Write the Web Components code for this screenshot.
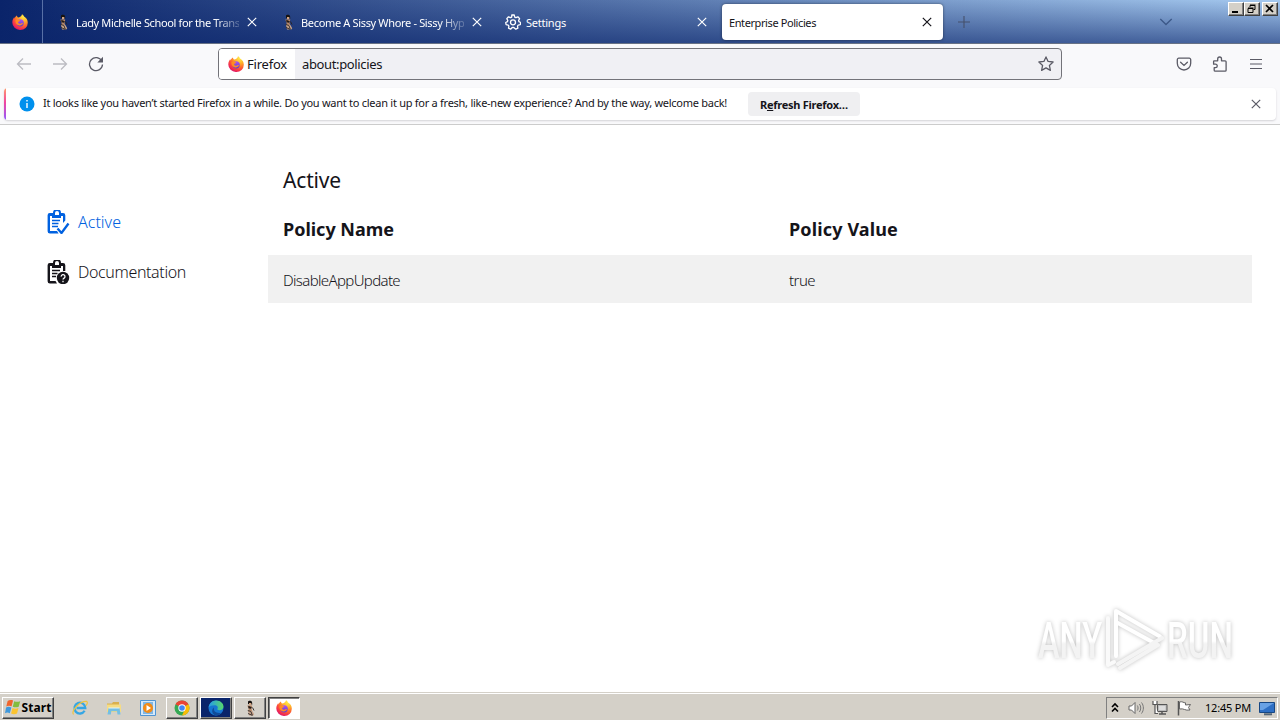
<!DOCTYPE html>
<html lang="en">
<head>
<meta charset="utf-8">
<title>Enterprise Policies</title>
<style>
    html, body {
        margin: 0;
        height: 100%;
        overflow: hidden;
        background: #fff;
    }
    body {
        font-family: "Noto Sans", "DejaVu Sans Condensed", sans-serif;
        font-size: 11px;
        color: #000;
    }
</style>
</head>
<body>
<desktop-screen></desktop-screen>
<script>
const FIREFOX = `
    <defs>
        <radialGradient id="fx" cx=".75" cy=".12" r=".95">
            <stop offset="0" stop-color="#fff04a"/><stop offset=".35" stop-color="#ffb02a"/>
            <stop offset=".62" stop-color="#ff6a2c"/><stop offset=".85" stop-color="#f5304c"/>
            <stop offset="1" stop-color="#d9186c"/>
        </radialGradient>
        <linearGradient id="fg" x1="0" y1="0" x2="0" y2="1">
            <stop offset="0" stop-color="#b054f0"/><stop offset="1" stop-color="#5a3bd0"/>
        </linearGradient>
    </defs>
    <path fill="url(#fx)" d="M10 .2c1.200 .6 1.700 1.500 2.100 2.400 2.300 1.300 3.700 3.500 3.700 6.100A7.500 7.200 0 0 1 8.200 16 7.700 7.400 0 0 1 .3 8.500C.3 6.200 1.200 4.400 2.300 3c0 .6.1 1 .3 1.400C3 3.100 3.900 2 5 1.400c0 1 .5 1.700 1.200 2.200C7.800 3 9.800 2.200 10 .2z"/>
    <circle cx="8.200" cy="8.800" r="3.600" fill="url(#fg)"/>
    <path fill="#ff8b24" d="M3.500 6.200c1.500-1 3.300-.9 4.600.2-.2.900-1.600 1-2 1.700-.2.900.7 1.900 2.100 1.700 1.200-.2 1.800-1 2.800-.7-.6 1.700-2.300 2.700-4 2.300-2.300-.4-3.900-2.600-3.500-5.200z"/>`;

const ICONS = {
    firefox: FIREFOX,
    close: `<path d="M3.800 3.800l8.400 8.400M12.200 3.800l-8.400 8.400" fill="none" stroke="currentColor" stroke-width="1.200"/>`,
    plus: `<path d="M8 2v12M2 8h12" fill="none" stroke="currentColor" stroke-width="1.100"/>`,
    chevron: `<path d="M2.300 5l5.700 5.500L13.700 5" fill="none" stroke="currentColor" stroke-width="1.300"/>`,
    back: `<path d="M15 8H1.500M7 2.500L1.500 8 7 13.500" fill="none" stroke="currentColor" stroke-width="1.300"/>`,
    forward: `<path d="M1 8h13.500M9 2.500L14.500 8 9 13.500" fill="none" stroke="currentColor" stroke-width="1.300"/>`,
    reload: `<path d="M13.800 5.200A6.500 6.500 0 1 0 14.500 8.500" fill="none" stroke="currentColor" stroke-width="1.300"/><path d="M15 .8v5.700H9.300z" fill="currentColor"/>`,
    star: `<path d="M8 .9l2.100 4.500 5 .6-3.700 3.400 1 5L8 11.900l-4.400 2.500 1-5L.9 6l5-.6z" fill="none" stroke="currentColor" stroke-width="1.300" stroke-linejoin="round"/>`,
    pocket: `<path d="M2.800 2.200h10.400a1.500 1.500 0 0 1 1.500 1.500v3.600a6.700 6.700 0 0 1-13.400 0V3.700a1.500 1.500 0 0 1 1.500-1.500zM4.600 6.200L8 9.400l3.400-3.200" fill="none" stroke="currentColor" stroke-width="1.300" stroke-linecap="round"/>`,
    puzzle: `<path d="M2.200 4.800h3.500V2.900a1.900 1.900 0 0 1 3.800 0v1.900h3.600a1 1 0 0 1 1 1v8.400a1 1 0 0 1-1 1H3.200a1 1 0 0 1-1-1v-2.500h1.300a1.700 1.700 0 0 0 0-3.500H1.600V5.400a.6.600 0 0 1 .6-.6z" fill="none" stroke="currentColor" stroke-width="1.300" stroke-linejoin="round"/>`,
    menu: `<path d="M2 3.500h12M2 8h12M2 12.500h12" fill="none" stroke="currentColor" stroke-width="1.200"/>`,
    gear: `<path d="M6.800 1h2.400l.5 2.100 1.200.6 2-.9 1.700 1.800-1 1.900.4 1.200 1.700.8-.4 2.200-2.100.4-.7 1 .4 2.100-2.100 1L8.800 13.500H7.200L5.600 15.200l-2.100-1 .4-2.100-.7-1-2.100-.4-.4-2.200 1.700-.8.400-1.200-1-1.900 1.700-1.800 2 .9 1.200-.6z" fill="none" stroke="currentColor" stroke-width="1.300" stroke-linejoin="round"/><circle cx="8" cy="8.300" r="2.500" fill="none" stroke="currentColor" stroke-width="1.300"/>`,
    info: `<circle cx="8" cy="8" r="7.500" fill="#0090ed"/><path d="M8 7v5M8 4v1.500" stroke="#fff" stroke-width="1.400"/>`,
    lady: `<path d="M6 1.500C6.500.3 9.500.3 10 2l.3 2.500H8L6 4z" fill="#17120f"/><path d="M7 3h2.300v2.300H7z" fill="#d3a583"/><path d="M5.300 5.500h5l-.8 3.500.8 2.500-4.300.5.7-3z" fill="#b78867"/><path d="M6.300 5.800l3.500 1.400-.8 1.600-2.600-.5z" fill="#231b18"/><path d="M6 11l4.200-.3 2 3.600-1 1.200H7z" fill="#c9a58c"/><path d="M5.800 10.600l3 .8 1.500 3.600M10.500 7.500l1.500 3M6 13.500l4.500 2" stroke="#282321" fill="none" stroke-width=".9"/>`,
    active: `<path fill-rule="evenodd" fill="currentColor" d="M4 3h3a4 4 0 0 1 8 0h2a2.300 2.300 0 0 1 2.300 2.300v5.200l-2.300 2.600V6h-2v2H6V6H4v15h7l1.600 2.500H4A2.400 2.400 0 0 1 1.600 21V5.300A2.300 2.300 0 0 1 4 3zm5 2h4V3a2 2 0 0 0-4 0z"/><path d="M6 10.500h8M6 13.500h6.500M6 16.500h6" stroke="currentColor" stroke-width="1.500"/><path d="M11.500 18.500l4 4.500 7-9.500" fill="none" stroke="currentColor" stroke-width="2.300"/>`,
    documentation: `<path fill-rule="evenodd" fill="currentColor" d="M4 3h3a4 4 0 0 1 8 0h2a2.300 2.300 0 0 1 2.300 2.300V11h-2.300V6h-2v2H6V6H4v15h5.500l1.500 2.500H4A2.400 2.400 0 0 1 1.600 21V5.300A2.300 2.300 0 0 1 4 3zm5 2h4V3a2 2 0 0 0-4 0z"/><path d="M6 10.500h8M6 13.500h5.500M6 16.500h4" stroke="currentColor" stroke-width="1.500"/><circle cx="17" cy="18" r="6.200" fill="currentColor"/><path d="M15.200 16.600a1.900 1.900 0 1 1 2.900 1.500c-.8.500-1.100.7-1.100 1.500M17 20.800v1.400" fill="none" stroke="#fff" stroke-width="1.300"/>`,
    flag: `<path d="M7.600 1.500C5.600.7 4 1 2.500 1.800L1.200 7c1.600-.8 3.300-.9 5-.1z" fill="#f0642c"/><path d="M8.700 2c1.700.9 3.700.9 5.600 0l-1.400 5.200c-1.800.9-3.700.9-5.600 0z" fill="#82bd3e"/><path d="M1 8c1.600-.9 3.300-.8 5 0l-1.500 5.300c-1.600-.8-3-.8-4.500 0z" fill="#3f98dc"/><path d="M7.100 8.400c1.700.9 3.700.9 5.600 0l-1.400 5.200c-1.900.9-3.800.9-5.600 0z" fill="#fbc430"/>`,
    ie: `<path d="M12.600 10.800A5.400 5.400 0 1 1 13.300 8H4.500" fill="none" stroke="#35a6e4" stroke-width="2.300"/><path d="M1.500 14.500C-1 11 7.500 1 14.500 1.400c1.600.7.500 3-.6 4.300" fill="none" stroke="#efc43e" stroke-width="1.200"/>`,
    folder: `<path d="M1 3.500h5l1-1.500h6v3H1z" fill="#d9b04f"/><path d="M1 4.500h14V12H1z" fill="#f6dc83"/><path d="M2.500 8h11l1 6.500h-3l-.5-3.300H5.300l-.5 3.300H1.500z" fill="#74bfe4"/><path d="M2.500 8h11" stroke="#dff4ff"/>`,
    player: `<path d="M.5.5h15v15H.5z" fill="#d7e9f8" stroke="#4f94d3"/><path d="M3 2h10v12H3z" fill="#7eb6e5"/><circle cx="8" cy="8" r="5" fill="#f38b16"/><path d="M6.500 5l4.500 3-4.500 3z" fill="#fff"/>`,
    chrome: `<circle cx="8" cy="8" r="7.500" fill="#35a853"/><path d="M8 8L1.500 4.200A7.500 7.500 0 0 1 14.500 4.300z" fill="#ea4335"/><path d="M8 8l6.500-3.700A7.500 7.500 0 0 1 8 15.500L11 9z" fill="#fbbc05"/><circle cx="8" cy="8" r="3.700" fill="#fff"/><circle cx="8" cy="8" r="2.800" fill="#4285f4"/>`,
    edge: `<defs><linearGradient id="eg"><stop offset="0" stop-color="#249bea"/><stop offset="1" stop-color="#58d86b"/></linearGradient></defs><circle cx="8" cy="8" r="7.500" fill="#1676d2"/><path d="M.6 7.500C1 3.300 4.300.5 8 .5c4.500 0 7.500 3 7.500 6 0 2.200-1.700 3.700-4 3.700-1.700 0-2.600-.7-2-1.600.9-1.500-.4-3.300-2.800-3.300C4 5.300 1.800 6 .6 7.500z" fill="url(#eg)"/><path d="M6 7.500c-.8 3.800 2.200 6.300 7.500 5.200A7.500 7.500 0 0 1 7 15.400C3.600 13.500 3.300 9.500 6 7.500z" fill="#124b98"/>`,
    up: `<path d="M5 7l3-3 3 3M5 11.500l3-3 3 3" fill="none" stroke="#000" stroke-width="1.600"/>`,
    speaker: `<path d="M1 6h2.500L7 2.500v11L3.500 10H1z" fill="#fff" stroke="#666" stroke-width="1"/><path d="M9.300 5.500c1 1.500 1 3.500 0 5M11.400 4c1.800 2.300 1.800 5.700 0 8M13.500 2.500c2.500 3.200 2.500 7.800 0 11" fill="none" stroke="#777"/>`,
    network: `<path d="M5.500 4.500h9.500v7H5.500z" fill="#bbb" stroke="#555"/><path d="M7 6h6.500v4H7z" fill="#ddd"/><path d="M7 14h7M10 12v2" stroke="#555" stroke-width="1.500"/><path d="M1 1v3.500h4V1M3 4.500v9h3" stroke="#555" stroke-width="1.200" fill="#fff"/>`,
    notice: `<path d="M2.500 1v14.500" stroke="#555" stroke-width="1.500"/><path d="M3.500 2c3-1 4 1 6 .8V5l5-.5-2 3 1.500 2.500c-5 1-6-2-10.500-1z" fill="#fff" stroke="#666"/>`,
    show: `<path d="M.5 2.500h15v10H.5z" fill="#2e6fc4" stroke="#174783"/><path d="M1 3h14L4 10H1z" fill="#69a2e5"/><path d="M5 14.300h8" stroke="#567" stroke-width="2"/>`
};

class UiIcon extends HTMLElement{
    connectedCallback(){
        const size = this.getAttribute('size') || 16;
        const box = this.getAttribute('box') || 16;
        this.attachShadow({mode: 'open'}).innerHTML = `
        <style>
            :host { display: block; flex: none; width: ${size}px; height: ${size}px; }
            svg { display: block; }
        </style>
        <svg width="${size}" height="${size}" viewBox="0 0 ${box} ${box}">${ICONS[this.getAttribute('name')]}</svg>`;
    }
}
customElements.define('ui-icon', UiIcon);

// One line of text, tracked so that it takes exactly its "width"
class UiLabel extends HTMLElement{
    connectedCallback(){
        this.attachShadow({mode: 'open'}).innerHTML = `
        <style>
            :host { display: block; flex: none; white-space: nowrap; }
            span { display: inline-block; }
        </style>
        <span><slot></slot></span>`;
        const span = this.shadowRoot.querySelector('span');
        const width = Number(this.getAttribute('width'));
        const spacing = (width - span.getBoundingClientRect().width) / this.textContent.length;
        span.style.letterSpacing = spacing + 'px';
    }
}
customElements.define('ui-label', UiLabel);

class BrowserTab extends HTMLElement{
    connectedCallback(){
        const icon = this.getAttribute('icon');
        this.attachShadow({mode: 'open'}).innerHTML = `
        <style>
            :host {
                display: flex;
                align-items: center;
                box-sizing: border-box;
                width: 221px;
                height: 36px;
                padding: 0 8px;
                gap: 5px;
                color: #fff;
                border-radius: 4px;
            }
            :host([selected]) {
                padding-left: 7px;
                background: #fff;
                color: #15141a;
                box-shadow: 0 0 3px rgba(0, 0, 0, .5);
            }
            .title {
                flex: 1;
                overflow: hidden;
                line-height: 16px;
                padding-top: 2px;
            }
            :host([fade]) .title {
                -webkit-mask-image: linear-gradient(to right, #000 138px, transparent 170px);
                mask-image: linear-gradient(to right, #000 138px, transparent 170px);
            }
        </style>
        ${icon ? `<ui-icon name="${icon}"></ui-icon>` : ''}
        <div class="title"><slot></slot></div>
        <ui-icon name="close"></ui-icon>`;
    }
}
customElements.define('browser-tab', BrowserTab);

class WindowButtons extends HTMLElement{
    connectedCallback(){
        this.attachShadow({mode: 'open'}).innerHTML = `
        <style>
            :host { display: flex; position: absolute; top: 2px; right: 2px; }
            i {
                box-sizing: border-box;
                width: 16px;
                height: 14px;
                background: #d4d0c8;
                border: 1px solid;
                border-color: #fff #404040 #404040 #fff;
                box-shadow: inset -1px -1px #808080;
            }
            i:last-child { margin-left: 2px; }
            svg { display: block; }
        </style>
        <i><svg width="14" height="12"><path d="M3 9h6" stroke="#000" stroke-width="2"/></svg></i>
        <i><svg width="14" height="12"><path d="M5 4V2.500h5v4H8.500M5 2h5.500M3 5.500h5v4H3zM3 5h5.500" fill="none" stroke="#000"/></svg></i>
        <i><svg width="14" height="12"><path d="M3 2l7 7M10 2L3 9" stroke="#000" stroke-width="1.700"/></svg></i>`;
    }
}
customElements.define('window-buttons', WindowButtons);

class TabStrip extends HTMLElement{
    connectedCallback(){
        this.attachShadow({mode: 'open'}).innerHTML = `
        <style>
            :host {
                display: flex;
                align-items: center;
                position: relative;
                box-sizing: border-box;
                height: 44px;
                border-bottom: 1px solid #687285;
                background: linear-gradient(to bottom, rgba(10, 36, 106, 0), rgba(10, 36, 106, .6)),
                    linear-gradient(to right, #0a246a, #a6caf0);
            }
            .view {
                box-sizing: border-box;
                width: 43px;
                height: 43px;
                padding: 14px 0 0 12px;
                border-right: 1px solid #5870a6;
            }
            .tabs { display: flex; gap: 4px; margin-left: 4px; }
            .new { margin-left: 13px; color: #45516c; }
            .all { margin-left: 186px; color: #3c5888; }
        </style>
        <div class="view"><ui-icon name="firefox"></ui-icon></div>
        <div class="tabs">
            <browser-tab icon="lady" fade><ui-label width="170">Lady Michelle School for the Transg</ui-label></browser-tab>
            <browser-tab icon="lady" fade><ui-label width="170">Become A Sissy Whore - Sissy Hypn</ui-label></browser-tab>
            <browser-tab icon="gear"><ui-label width="40">Settings</ui-label></browser-tab>
            <browser-tab selected><ui-label width="87">Enterprise Policies</ui-label></browser-tab>
        </div>
        <ui-icon class="new" name="plus"></ui-icon>
        <ui-icon class="all" name="chevron"></ui-icon>
        <window-buttons></window-buttons>`;
    }
}
customElements.define('tab-strip', TabStrip);

class NavBar extends HTMLElement{
    connectedCallback(){
        this.attachShadow({mode: 'open'}).innerHTML = `
        <style>
            :host {
                display: flex;
                align-items: center;
                height: 40px;
                padding: 0 16px;
                background: #f9f9fb;
                color: #5b5b66;
            }
            .history { display: flex; gap: 20px; flex: 1; }
            .off { color: #bcbcc2; }
            .url {
                display: flex;
                align-items: center;
                box-sizing: border-box;
                width: 844px;
                height: 32px;
                padding-right: 7px;
                border: 1px solid #737379;
                border-radius: 4px;
                background: #f0f0f4;
                overflow: hidden;
                font-size: 13px;
                line-height: 20px;
                color: #15141a;
            }
            .identity {
                display: flex;
                align-items: center;
                box-sizing: border-box;
                width: 76px;
                height: 30px;
                padding-left: 9px;
                gap: 3px;
                margin-right: 7px;
                background: #fff;
            }
            .star { margin-left: auto; color: #5b5b66; }
            .tools { display: flex; gap: 20px; flex: 1; justify-content: flex-end; }
            .history { margin-right: 0; flex: 0 0 202px; }
        </style>
        <div class="history">
            <ui-icon class="off" name="back"></ui-icon>
            <ui-icon class="off" name="forward"></ui-icon>
            <ui-icon name="reload"></ui-icon>
        </div>
        <div class="url">
            <div class="identity"><ui-icon name="firefox"></ui-icon><ui-label width="40">Firefox</ui-label></div>
            <ui-label width="80">about:policies</ui-label>
            <ui-icon class="star" name="star"></ui-icon>
        </div>
        <div class="tools">
            <ui-icon name="pocket"></ui-icon>
            <ui-icon name="puzzle"></ui-icon>
            <ui-icon name="menu"></ui-icon>
        </div>`;
    }
}
customElements.define('nav-bar', NavBar);

class NotificationBar extends HTMLElement{
    connectedCallback(){
        this.attachShadow({mode: 'open'}).innerHTML = `
        <style>
            :host {
                display: block;
                box-sizing: border-box;
                height: 41px;
                padding: 4px 4px 4px 4px;
                border-bottom: 1px solid #ccc;
                background: #f9f9fb;
            }
            .bar {
                display: flex;
                align-items: center;
                height: 32px;
                box-sizing: border-box;
                padding: 0 12px 0 0;
                border-radius: 4px;
                background: #fff;
                box-shadow: 0 1px 2px rgba(58, 57, 68, .2);
                color: #15141a;
                line-height: 16px;
                overflow: hidden;
            }
            .accent { width: 2px; height: 32px; margin-right: 13px; background: linear-gradient(#ff9a6b, #f1469f 45%, #9059ff); }
            .message { margin: -2px 21px 0 8px; }
            button {
                width: 112px;
                height: 24px;
                padding: 0;
                border: 0;
                border-radius: 4px;
                background: #efeff1;
                color: #15141a;
                font: bold 11px "Noto Sans", sans-serif;
            }
            button ui-label { display: inline-block; }
            .close { margin-left: auto; color: #5b5b66; }
        </style>
        <div class="bar">
            <div class="accent"></div>
            <ui-icon name="info"></ui-icon>
            <ui-label class="message" width="684">It looks like you haven’t started Firefox in a while. Do you want to clean it up for a fresh, like-new experience? And by the way, welcome back!</ui-label>
            <button><ui-label width="88">R<u>e</u>fresh Firefox…</ui-label></button>
            <ui-icon class="close" name="close"></ui-icon>
        </div>`;
    }
}
customElements.define('notification-bar', NotificationBar);

class PolicyCategory extends HTMLElement{
    connectedCallback(){
        this.attachShadow({mode: 'open'}).innerHTML = `
        <style>
            :host {
                display: flex;
                align-items: center;
                height: 50px;
                gap: 8px;
                font-size: 16px;
                font-weight: 300;
                color: #15141a;
            }
            :host([selected]) { color: #0061e0; }
        </style>
        <ui-icon name="${this.getAttribute('icon')}" size="24" box="24"></ui-icon>
        <slot></slot>`;
    }
}
customElements.define('policy-category', PolicyCategory);

class PoliciesPage extends HTMLElement{
    connectedCallback(){
        this.attachShadow({mode: 'open'}).innerHTML = `
        <style>
            :host {
                display: flex;
                position: relative;
                flex: 1;
                background: #fff;
                color: #15141a;
            }
            nav { width: 222px; padding: 72px 0 0 46px; }
            main { width: 984px; padding-top: 40px; }
            h1 {
                margin: 0 0 19px 15px;
                font-size: 21px;
                font-weight: 400;
                line-height: 30px;
            }
            .row {
                display: grid;
                grid-template-columns: 506px 1fr;
                align-items: center;
                padding-left: 15px;
                height: 48px;
                font-size: 15px;
                font-weight: 300;
            }
            .head { height: 30px; margin-bottom: 11px; font-size: 18px; font-weight: 700; }
            .value { box-sizing: border-box; padding-top: 2px; background: #f1f1f1; }
            .mark { position: absolute; right: 38px; bottom: 14px; filter: drop-shadow(0 0 2px rgba(0, 0, 0, .25)); }
        </style>
        <nav>
            <policy-category icon="active" selected><ui-label width="43">Active</ui-label></policy-category>
            <policy-category icon="documentation"><ui-label width="108">Documentation</ui-label></policy-category>
        </nav>
        <main>
            <h1><ui-label width="58">Active</ui-label></h1>
            <div class="row head"><ui-label width="111">Policy Name</ui-label><ui-label width="109">Policy Value</ui-label></div>
            <div class="row value"><ui-label width="117">DisableAppUpdate</ui-label><ui-label width="26">true</ui-label></div>
        </main>
        <svg class="mark" width="210" height="76" viewBox="0 0 210 76">
            <defs>
                <linearGradient id="m" x1="0" y1="0" x2="0" y2="1"><stop offset=".5" stop-color="#fff"/><stop offset=".55" stop-color="#f3f3f3"/></linearGradient>
            </defs>
            <g fill="url(#m)" font-family="Roboto, sans-serif" font-weight="500" font-size="50">
                <text x="6" y="56" textLength="64" lengthAdjust="spacingAndGlyphs">ANY</text>
                <text x="135" y="56" textLength="66" lengthAdjust="spacingAndGlyphs">RUN</text>
            </g>
            <g fill="none" stroke="#fff" stroke-width="4" stroke-linejoin="round" stroke-linecap="round">
                <path d="M84 54V9l44 25.500"/>
                <path d="M84 20l40 22"/>
                <path d="M130 36L86 62M126 43L88 66" stroke="#f4f4f4"/>
                <path d="M76 16v47l6-3" stroke="#fafafa"/>
            </g>
        </svg>`;
    }
}
customElements.define('policies-page', PoliciesPage);

class TaskButton extends HTMLElement{
    connectedCallback(){
        this.attachShadow({mode: 'open'}).innerHTML = `
        <style>
            :host {
                display: flex;
                align-items: center;
                justify-content: center;
                box-sizing: border-box;
                width: 32px;
                height: 22px;
                border: 1px solid;
                border-color: #fff #404040 #404040 #fff;
                box-shadow: inset -1px -1px #808080;
                background: #d4d0c8;
            }
            :host([pressed]) {
                border-color: #404040 #fff #fff #404040;
                box-shadow: inset 1px 1px #808080;
                background: #fff;
            }
            :host([dark]) { background: #0a246a; }
            :host([flat]) { border-color: transparent; box-shadow: none; }
        </style>
        <slot></slot>`;
    }
}
customElements.define('task-button', TaskButton);

class TaskBar extends HTMLElement{
    connectedCallback(){
        this.attachShadow({mode: 'open'}).innerHTML = `
        <style>
            :host {
                display: flex;
                align-items: center;
                box-sizing: border-box;
                height: 28px;
                padding: 2px 2px 0;
                border-top: 1px solid #d4d0c8;
                box-shadow: inset 0 1px #fff;
                background: #d4d0c8;
            }
            .start { width: 52px; margin-right: 10px; gap: 0; font: bold 12px/18px "Noto Sans", sans-serif; }
            .tasks { display: flex; gap: 2px; }
            .tray {
                display: flex;
                align-items: center;
                box-sizing: border-box;
                width: 172px;
                height: 22px;
                margin-left: auto;
                padding-right: 1px;
                border: 1px solid;
                border-color: #808080 #fff #fff #808080;
            }
            .tray ui-icon { margin-right: 8px; }
            .tray ui-icon:first-child { margin: 0 5px 0 0; }
            .clock { margin: 0 8px 0 5px; }
            .tray ui-icon:last-child { margin: 0; }
        </style>
        <task-button class="start"><ui-icon name="flag" size="17"></ui-icon><ui-label width="30">Start</ui-label></task-button>
        <div class="tasks">
            <task-button flat><ui-icon name="ie"></ui-icon></task-button>
            <task-button flat><ui-icon name="folder"></ui-icon></task-button>
            <task-button flat><ui-icon name="player"></ui-icon></task-button>
            <task-button><ui-icon name="chrome"></ui-icon></task-button>
            <task-button dark><ui-icon name="edge"></ui-icon></task-button>
            <task-button><ui-icon name="lady"></ui-icon></task-button>
            <task-button pressed><ui-icon name="firefox"></ui-icon></task-button>
        </div>
        <div class="tray">
            <ui-icon name="up"></ui-icon>
            <ui-icon name="speaker"></ui-icon>
            <ui-icon name="network"></ui-icon>
            <ui-icon name="notice"></ui-icon>
            <ui-label class="clock" width="46">12:45 PM</ui-label>
            <ui-icon name="show"></ui-icon>
        </div>`;
    }
}
customElements.define('task-bar', TaskBar);

class DesktopScreen extends HTMLElement{
    connectedCallback(){
        this.attachShadow({mode: 'open'}).innerHTML = `
        <style>
            :host { display: flex; flex-direction: column; width: 1280px; height: 720px; overflow: hidden; }
        </style>
        <tab-strip></tab-strip>
        <nav-bar></nav-bar>
        <notification-bar></notification-bar>
        <policies-page></policies-page>
        <task-bar></task-bar>`;
    }
}
customElements.define('desktop-screen', DesktopScreen);
</script>
</body>
</html>
